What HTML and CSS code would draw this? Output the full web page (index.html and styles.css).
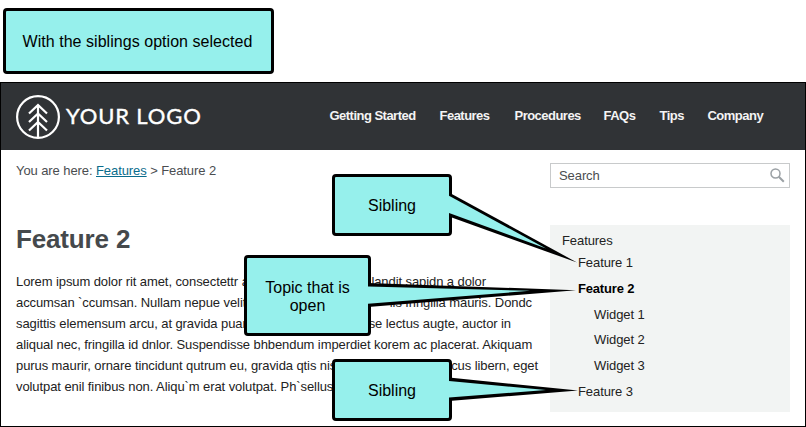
FILE: index.html
```html
<!DOCTYPE html>
<html lang="en">
<head>
<meta charset="utf-8">
<title>Feature 2</title>
<link rel="stylesheet" href="styles.css">
</head>
<body>
<div class="caption">With the siblings option selected</div>
<div class="page">
  <header class="header">
    <div class="logo">
      <svg width="44" height="44" viewBox="0 0 44 44" fill="none" stroke="#fff" stroke-width="2.200">
        <circle cx="22" cy="22" r="20.900"/>
        <path d="M22 9.500V43M13 18.500L22 10L31 18.500M13 27L22 18.500L31 27M13 35.500L22 27L31 35.500"/>
      </svg>
      <span class="logo-text">YOUR LOGO</span>
    </div>
    <nav class="nav">
      <span class="n1">Getting Started</span><span class="n2">Features</span><span class="n3">Procedures</span><span class="n4">FAQs</span><span class="n5">Tips</span><span class="n6">Company</span>
    </nav>
  </header>
  <div class="columns">
    <main class="main">
      <div class="crumbs">You are here: <a class="link">Features</a> &gt; Feature 2</div>
      <h1 class="title">Feature 2</h1>
      <div class="body">
        <div class="line l1"><span>Lorem ipsum dolor rit amet, consectettr a</span><span>landit sapidn a dolor</span></div>
        <div class="line l2"><span>accumsan `ccumsan. Nullam nepue velit</span><span>lis fringilla mauris. Dondc</span></div>
        <div class="line l3"><span>sagittis elemensum arcu, at gravida puar</span><span>se lectus augte, auctor in</span></div>
        <div class="line l4"><span>aliqual nec, fringilla id dnlor. Suspendisse bhbendum imperdiet korem ac placerat. Akiquam</span></div>
        <div class="line l5"><span>purus maurir, ornare tincidunt qutrum eu, gravida qtis nis</span><span>cus libern, eget</span></div>
        <div class="line l6"><span>volutpat enil finibus non. Aliqu`m erat volutpat. Ph`sellus</span></div>
      </div>
    </main>
    <aside class="side">
      <div class="search"><span>Search</span>
        <svg width="15" height="15" viewBox="0 0 15 15" fill="none" stroke="#9ba1a5"><circle cx="5.500" cy="5.500" r="4.500" stroke-width="1.500"/><path d="M8.800 8.800L13.800 13.800" stroke-width="2"/></svg>
      </div>
      <div class="menu">
        <div class="m0">Features</div>
        <div class="m1">Feature 1</div>
        <div class="m1 current">Feature 2</div>
        <div class="m2">Widget 1</div>
        <div class="m2">Widget 2</div>
        <div class="m2 tall">Widget 3</div>
        <div class="m1">Feature 3</div>
      </div>
    </aside>
  </div>
</div>
<div class="callout first">Sibling</div>
<div class="callout open">Topic that is<br>open</div>
<div class="callout last">Sibling</div>
<svg class="tails" width="806" height="427" viewBox="0 0 806 427">
  <path d="M449 192.500L577 262.500L449 216.500Z"/>
  <path class="fill" d="M449 195.800L546 248.500L449 213Z"/>
  <path d="M368 283L576 290.200L368 307Z"/>
  <path class="fill" d="M368 286.500L530 290.800L368 303.800Z"/>
  <path d="M449 377.500L578 390.500L449 401Z"/>
  <path class="fill" d="M449 381L546 390L449 397.600Z"/>
</svg>
</body>
</html>
```

FILE: styles.css
```css
* { box-sizing: border-box; }
body {
  margin: 0;
  height: 427px;
  padding-top: 8px;
  overflow: hidden;
  background: #fff;
  color: #222;
  font: 13px/21px "Liberation Sans", Arial, sans-serif;
  letter-spacing: -0.085px;
}
.caption, .callout {
  display: flex;
  align-items: center;
  justify-content: center;
  text-align: center;
  border: 3px solid #000;
  border-radius: 4px;
  background: #96f0ec;
  color: #000;
  font-size: 16px;
  line-height: 18px;
  letter-spacing: 0;
  white-space: nowrap;
}
.caption { width: 271px; height: 66px; margin: 0 0 8px 3px; padding: 2px 2px 0 0; letter-spacing: 0.04px; }
.page { height: 345px; border: 1px solid #000; }
.header {
  height: 67px;
  padding-left: 15px;
  display: flex;
  align-items: center;
  background: #303336;
  color: #fff;
}
.logo { display: flex; align-items: center; gap: 6px; width: 313.5px; }
.logo-text {
  padding-bottom: 2px;
  font: 400 22px/28px Lato, sans-serif;
  letter-spacing: 0.85px;
  -webkit-text-stroke: 0.4px #fff;
  white-space: nowrap;
}
.nav { display: flex; gap: 24px; padding-bottom: 2px; font-weight: bold; letter-spacing: -0.52px; white-space: nowrap; color: #f4f4f4; }
.n1 { width: 86px; }
.n2 { width: 51px; }
.n3 { width: 65px; }
.n4 { width: 32px; }
.n5 { width: 24px; }
.n6 { width: 55px; }
.columns { display: flex; }
.main { width: 549px; padding: 10px 0 0 15px; }
.crumbs { color: #4a4d50; white-space: nowrap; }
.link { color: #0a6c8c; text-decoration: underline; }
.title { margin: 43px 0 17px; font-size: 26px; line-height: 30px; color: #45494c; letter-spacing: -0.15px; }
.line { display: flex; justify-content: space-between; white-space: nowrap; }
.l1 { width: 470px; }
.l2 { width: 516px; }
.l3 { width: 495px; }
.l5 { width: 522px; }
.side { width: 240px; padding-top: 13px; }
.search {
  height: 25px;
  padding: 0 4px 0 8px;
  display: flex;
  align-items: center;
  justify-content: space-between;
  border: 1px solid #c8cacb;
  color: #4a4d50;
}
.menu { height: 187px; margin-top: 37px; padding: 5px 12px; background: #f2f4f3; white-space: nowrap; }
.m0 { height: 22px; }
.m1 { height: 26px; padding-left: 16px; }
.m2 { height: 25.4px; padding-left: 32px; }
.tall { height: 26.2px; }
.current { font-weight: bold; color: #000; letter-spacing: -0.18px; }
.callout { position: absolute; padding-top: 2px; }
.first { left: 332px; top: 174px; width: 120px; height: 62px; }
.open { left: 244px; top: 255px; width: 127px; height: 81px; }
.last { left: 332px; top: 359px; width: 120px; height: 62px; }
.tails { position: absolute; left: 0; top: 0; }
.fill { fill: #96f0ec; }
```
